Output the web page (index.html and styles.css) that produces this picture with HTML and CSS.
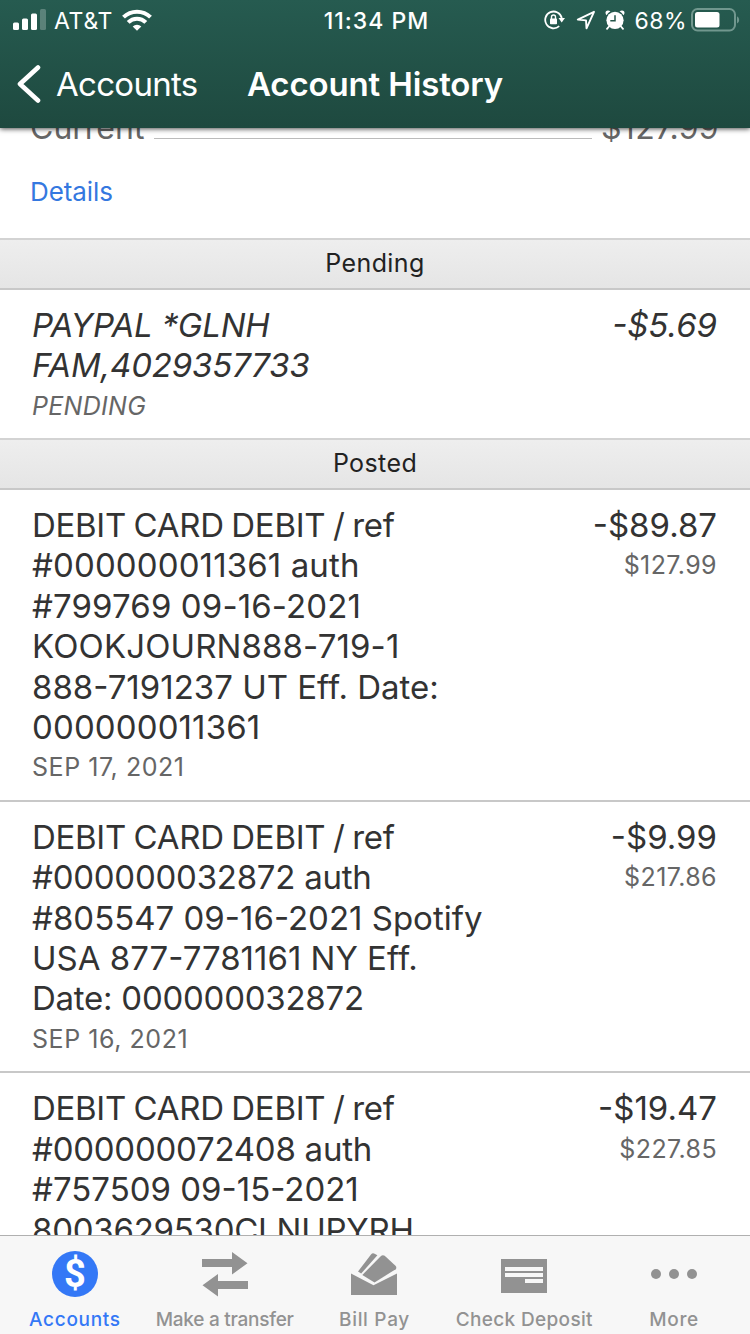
FILE: index.html
```html
<!DOCTYPE html>
<html lang="en">
<head>
  <meta charset="UTF-8">
  <meta name="viewport" content="width=device-width, initial-scale=1.0">
  <title>Account History</title>
  <link rel="stylesheet" href="styles.css">
</head>
<body>
  <div class="app">
    <header class="header">
      <div class="status">
        <div class="status-left">
          <svg class="signal" width="34" height="22" viewBox="0 0 34 22" fill="#fff">
            <rect x="0" y="13.5" width="6" height="7.5" rx="1.5"/>
            <rect x="9" y="9.5" width="6" height="11.5" rx="1.5"/>
            <rect x="18" y="4.5" width="6" height="16.5" rx="1.5"/>
            <rect x="27" y="0" width="6" height="21" rx="1.5" opacity=".25"/>
          </svg>
          <span class="carrier">AT&amp;T</span>
          <svg class="wifi" width="30" height="22" viewBox="0 0 30 22" fill="none" stroke="#fff" stroke-width="4">
            <path d="M1.5 8.200a19.200 19.200 0 0 1 27 0"/>
            <path d="M6.200 13.300a12.400 12.400 0 0 1 17.600 0"/>
            <path d="M15 21.700l-4.300-4.300a6.200 6.200 0 0 1 8.600 0z" fill="#fff" stroke="none"/>
          </svg>
        </div>
        <span class="time">11:34 PM</span>
        <div class="status-right">
          <svg class="lock" width="22" height="20" viewBox="0 0 22 20" fill="none" stroke="#fff" stroke-width="1.8">
            <path d="M15.200 16.200A8.400 8.400 0 1 1 17.800 8"/>
            <path d="M14.500 8h6.500l-3.300 4.500z" fill="#fff" stroke="none"/>
            <rect x="6" y="8.600" width="7" height="5.600" rx=".8" fill="#fff" stroke="none"/>
            <path d="M7.500 9V7a2 2 0 0 1 4 0v2" stroke-width="1.4"/>
          </svg>
          <svg class="location" width="20" height="20" viewBox="0 0 20 20" fill="none" stroke="#fff" stroke-width="1.9" stroke-linejoin="round">
            <path d="M18 1.800L1.800 9.600l8.200.8.500 7.900z"/>
          </svg>
          <svg class="alarm" width="20" height="20" viewBox="0 0 20 20">
            <circle cx="10" cy="10.3" r="8.6" fill="#fff"/>
            <path d="M1.500 5.200a11 11 0 0 1 4-4Q2.600-.3 1 1.300-.200 3 1.500 5.200zM18.500 5.200a11 11 0 0 0-4-4Q17.400-.3 19 1.300q1.200 1.700-.5 3.900z" fill="#fff"/>
            <path d="M4 16.500l-2 2.300M16 16.500l2 2.300" stroke="#fff" stroke-width="1.8" stroke-linecap="round"/>
            <path d="M10 5.200v5.500H5.300" fill="none" stroke="#235549" stroke-width="1.5"/>
          </svg>
          <span class="percent">68%</span>
          <svg class="battery" width="49" height="24" viewBox="0 0 49 24">
            <rect x="1" y="1" width="43" height="21.5" rx="5.5" fill="none" stroke="#71978e" stroke-width="2"/>
            <rect x="4" y="4" width="24.5" height="15.5" rx="2.5" fill="#fff"/>
            <path d="M46 8.200q2.200 1.200 2.200 3.700T46 15.600z" fill="#71978e"/>
          </svg>
        </div>
      </div>
      <div class="navbar">
        <a class="back">
          <svg width="24" height="38" viewBox="0 0 24 38" fill="none" stroke="#fff" stroke-width="4.6" stroke-linecap="round" stroke-linejoin="round">
            <path d="M21 2.500L3 19l18 16.500"/>
          </svg>
          <span>Accounts</span>
        </a>
        <h1 class="title">Account History</h1>
      </div>
    </header>

    <main class="content">
      <section class="summary">
        <div class="balance">
          <span class="balance-label">Current</span>
          <span class="leader"></span>
          <span class="balance-amount">$127.99</span>
        </div>
        <a class="details">Details</a>
      </section>

      <h2 class="divider">Pending</h2>
      <article class="item pending">
        <div class="info">
          <p class="description">PAYPAL *GLNH<br>FAM,4029357733</p>
          <p class="date">PENDING</p>
        </div>
        <div class="sums">
          <p class="amount">-$5.69</p>
        </div>
      </article>

      <h2 class="divider">Posted</h2>
      <article class="item">
        <div class="info">
          <p class="description"><span class="tight">DEBIT CARD DEBIT / ref</span><br><span class="loose">#000000011361 auth</span><br><span class="loose">#799769 09-16-2021</span><br><span class="loose">KOOKJOURN888-719-1</span><br>888-7191237 UT Eff. Date:<br><span class="loose">000000011361</span></p>
          <p class="date">SEP 17, 2021</p>
        </div>
        <div class="sums">
          <p class="amount">-$89.87</p>
          <p class="running">$127.99</p>
        </div>
      </article>
      <article class="item">
        <div class="info">
          <p class="description"><span class="tight">DEBIT CARD DEBIT / ref</span><br><span class="snug">#000000032872 auth</span><br>#805547 09-16-2021 Spotify<br>USA 877-7781161 NY Eff.<br><span class="snug">Date: 000000032872</span></p>
          <p class="date">SEP 16, 2021</p>
        </div>
        <div class="sums">
          <p class="amount">-$9.99</p>
          <p class="running">$217.86</p>
        </div>
      </article>
      <article class="item">
        <div class="info">
          <p class="description"><span class="tight">DEBIT CARD DEBIT / ref</span><br><span class="snug">#000000072408 auth</span><br>#757509 09-15-2021<br><span class="snug">8003629530CLNUPYRH</span></p>
        </div>
        <div class="sums">
          <p class="amount">-$19.47</p>
          <p class="running">$227.85</p>
        </div>
      </article>
    </main>

    <nav class="tabbar">
      <a class="tab active">
        <span class="coin">$</span>
        <span class="tab-label">Accounts</span>
      </a>
      <a class="tab">
        <svg width="46" height="46" viewBox="0 0 46 46" fill="#929292">
          <path d="M0 8h30V1l15.500 11.300L30 23.500V16H0zM46 30H16v-7L.5 34.300 16 45.500V38h30z"/>
        </svg>
        <span class="tab-label transfer">Make a transfer</span>
      </a>
      <a class="tab">
        <svg width="46" height="46" viewBox="0 0 46 46" fill="#929292">
          <path d="M0 22.500l22.500 11.800L46 22.500V44H0z"/>
          <path d="M7 20.500L20 3.500q1.600-2 3.600-.8l2.800 1.500L10.200 22.500z"/>
          <path d="M11.300 24L29.500 5.500q2-2 4.200-.7l10.500 9.700q2 2 .5 3.700L23.500 31.500z"/>
        </svg>
        <span class="tab-label">Bill Pay</span>
      </a>
      <a class="tab">
        <svg width="46" height="46" viewBox="0 0 46 46">
          <path d="M0 8h46v34H0z" fill="#929292"/>
          <path d="M4 16h38v4H4zM4 22h38v4H4zM24 28h18v4H24z" fill="#f7f7f7"/>
        </svg>
        <span class="tab-label deposit">Check Deposit</span>
      </a>
      <a class="tab">
        <svg width="46" height="46" viewBox="0 0 46 46" fill="#929292">
          <circle cx="5" cy="23" r="5"/>
          <circle cx="23" cy="23" r="5"/>
          <circle cx="41" cy="23" r="5"/>
        </svg>
        <span class="tab-label">More</span>
      </a>
    </nav>
  </div>
</body>
</html>
```
FILE: styles.css
```css
* {
  box-sizing: border-box;
}
body {
  margin: 0;
  font-family: Inter, "Liberation Sans", sans-serif;
  color: #333;
  background: #fff;
}
h1,
h2,
p {
  margin: 0;
  font-weight: 400;
}
svg {
  display: block;
  flex: none;
}
.app {
  display: flex;
  flex-direction: column;
  height: 1334px;
  overflow: hidden;
}

/* header */
.header {
  position: relative;
  z-index: 1;
  flex: none;
  height: 128px;
  color: #fff;
  background: linear-gradient(#265b50, #1e493f);
  box-shadow: 0 1px 5px rgba(0, 0, 0, 0.7);
}
.status {
  display: grid;
  grid-template-columns: 1fr auto 1fr;
  align-items: center;
  height: 40px;
  padding: 0 10px 0 13px;
  font-size: 23px;
}
.status-left,
.status-right {
  display: flex;
  align-items: center;
}
.status-right {
  justify-content: flex-end;
}
.carrier {
  margin: 2px 9px 0 7px;
  letter-spacing: 0.7px;
}
.time {
  padding-top: 2px;
  font-weight: 500;
  letter-spacing: 1px;
}
.location {
  margin: 0 9px 0 10px;
}
.percent {
  margin: 2px 4px 0 9px;
  letter-spacing: 0.5px;
}
.navbar {
  display: grid;
  grid-template-columns: 1fr auto 1fr;
  align-items: center;
  height: 88px;
  padding: 0 17px;
}
.back {
  display: flex;
  align-items: center;
  gap: 15px;
  font-size: 33px;
  letter-spacing: -0.7px;
}
.title {
  font-size: 33px;
  font-weight: 600;
  letter-spacing: -0.15px;
}

/* account summary, scrolled under the header */
.content {
  flex: 1;
  min-height: 0;
  overflow: hidden;
}
.summary {
  height: 130px;
  margin-top: -20px;
  padding: 0 31px 0 30px;
}
.balance {
  display: flex;
  align-items: baseline;
  font-size: 32px;
  line-height: 40px;
  color: #666;
}
.balance-amount {
  letter-spacing: 0.3px;
}
.leader {
  flex: 1;
  margin: 0 9px 0 10px;
  border-bottom: 1px solid #bbb;
}
.details {
  display: block;
  margin-top: 28px;
  font-size: 26px;
  line-height: 32px;
  letter-spacing: -0.1px;
  color: #3478e0;
}

/* transactions */
.divider {
  height: 52px;
  border-top: 2px solid #d3d3d3;
  border-bottom: 2px solid #c8c8c8;
  background: linear-gradient(#eee, #e5e5e5);
  font-size: 25px;
  line-height: 46px;
  letter-spacing: 0.4px;
  text-align: center;
  color: #222;
}
.item {
  display: flex;
  justify-content: space-between;
  padding: 15px 33px 12px 32px;
}
.item + .item {
  border-top: 2px solid #c8c8c8;
}
.description,
.amount {
  font-size: 33px;
  line-height: 40.4px;
}
.date,
.running {
  font-size: 25px;
  line-height: 40.4px;
  letter-spacing: 0.55px;
  color: #666;
}
.running {
  letter-spacing: 0.4px;
}
.tight {
  letter-spacing: -0.3px;
  word-spacing: -1.3px;
}
.snug {
  letter-spacing: -0.25px;
}
.loose {
  letter-spacing: 0.12px;
}
.pending {
  height: 148px;
  font-style: italic;
}
.pending .description {
  letter-spacing: -0.15px;
}
.pending .date {
  letter-spacing: 0.3px;
}
.sums {
  text-align: right;
}

/* tab bar */
.tabbar {
  display: grid;
  grid-template-columns: repeat(5, 1fr);
  flex: none;
  height: 99px;
  padding-right: 1px;
  border-top: 1px solid #b0b0b0;
  background: #f7f7f7;
  color: #929292;
}
.tab {
  display: flex;
  flex-direction: column;
  align-items: center;
  padding-top: 15px;
}
.active {
  color: #3478f6;
}
.coin {
  width: 46px;
  height: 46px;
  border-radius: 50%;
  background: #3478f6;
  color: #fff;
  font: bold 38px/46px Roboto, sans-serif;
  text-align: center;
}
.tab-label {
  margin-top: 10px;
  font-size: 19px;
  font-weight: 500;
  line-height: 26px;
  letter-spacing: 0.7px;
  white-space: nowrap;
}
.transfer {
  letter-spacing: -0.25px;
}
.deposit {
  letter-spacing: 0.35px;
}
```
